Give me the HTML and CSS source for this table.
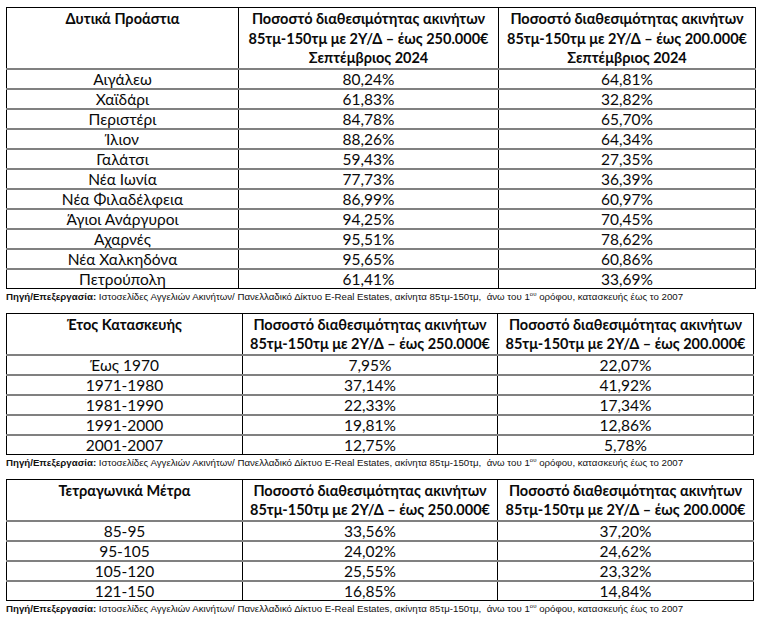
FILE: index.html
```html
<!DOCTYPE html>
<html lang="el">
<head>
<meta charset="utf-8">
<link rel="stylesheet" href="styles.css">
</head>
<body>
<div class="page">
  <table class="data t1">
    <colgroup><col class="c1"><col class="c2"><col class="c3"></colgroup>
    <thead>
      <tr>
        <th>Δυτικά Προάστια</th>
        <th>Ποσοστό διαθεσιμότητας ακινήτων<br>85τμ-150τμ με 2Υ/Δ – έως 250.000€<br>Σεπτέμβριος 2024</th>
        <th>Ποσοστό διαθεσιμότητας ακινήτων<br>85τμ-150τμ με 2Υ/Δ – έως 200.000€<br>Σεπτέμβριος 2024</th>
      </tr>
    </thead>
    <tbody>
      <tr><td>Αιγάλεω</td><td>80,24%</td><td>64,81%</td></tr>
      <tr><td>Χαϊδάρι</td><td>61,83%</td><td>32,82%</td></tr>
      <tr><td>Περιστέρι</td><td>84,78%</td><td>65,70%</td></tr>
      <tr><td>Ίλιον</td><td>88,26%</td><td>64,34%</td></tr>
      <tr><td>Γαλάτσι</td><td>59,43%</td><td>27,35%</td></tr>
      <tr><td>Νέα Ιωνία</td><td>77,73%</td><td>36,39%</td></tr>
      <tr><td>Νέα Φιλαδέλφεια</td><td>86,99%</td><td>60,97%</td></tr>
      <tr><td>Άγιοι Ανάργυροι</td><td>94,25%</td><td>70,45%</td></tr>
      <tr><td>Αχαρνές</td><td>95,51%</td><td>78,62%</td></tr>
      <tr><td>Νέα Χαλκηδόνα</td><td>95,65%</td><td>60,86%</td></tr>
      <tr><td>Πετρούπολη</td><td>61,41%</td><td>33,69%</td></tr>
    </tbody>
  </table>
  <p class="source"><b>Πηγή/Επεξεργασία:</b> Ιστοσελίδες Αγγελιών Ακινήτων/ Πανελλαδικό Δίκτυο E-Real Estates, ακίνητα 85τμ-150τμ,&nbsp; άνω του 1<sup>ου</sup> ορόφου, κατασκευής έως το 2007</p>

  <table class="data t2">
    <colgroup><col class="c1"><col class="c2"><col class="c3"></colgroup>
    <thead>
      <tr>
        <th>Έτος Κατασκευής</th>
        <th>Ποσοστό διαθεσιμότητας ακινήτων<br>85τμ-150τμ με 2Υ/Δ – έως 250.000€</th>
        <th>Ποσοστό διαθεσιμότητας ακινήτων<br>85τμ-150τμ με 2Υ/Δ – έως 200.000€</th>
      </tr>
    </thead>
    <tbody>
      <tr><td>Έως 1970</td><td>7,95%</td><td>22,07%</td></tr>
      <tr><td>1971-1980</td><td>37,14%</td><td>41,92%</td></tr>
      <tr><td>1981-1990</td><td>22,33%</td><td class="nudge">17,34%</td></tr>
      <tr><td>1991-2000</td><td>19,81%</td><td class="nudge">12,86%</td></tr>
      <tr><td>2001-2007</td><td>12,75%</td><td>5,78%</td></tr>
    </tbody>
  </table>
  <p class="source"><b>Πηγή/Επεξεργασία:</b> Ιστοσελίδες Αγγελιών Ακινήτων/ Πανελλαδικό Δίκτυο E-Real Estates, ακίνητα 85τμ-150τμ,&nbsp; άνω του 1<sup>ου</sup> ορόφου, κατασκευής έως το 2007</p>

  <table class="data t3">
    <colgroup><col class="c1"><col class="c2"><col class="c3"></colgroup>
    <thead>
      <tr>
        <th>Τετραγωνικά Μέτρα</th>
        <th>Ποσοστό διαθεσιμότητας ακινήτων<br>85τμ-150τμ με 2Υ/Δ – έως 250.000€</th>
        <th>Ποσοστό διαθεσιμότητας ακινήτων<br>85τμ-150τμ με 2Υ/Δ – έως 200.000€</th>
      </tr>
    </thead>
    <tbody>
      <tr><td>85-95</td><td>33,56%</td><td>37,20%</td></tr>
      <tr><td>95-105</td><td>24,02%</td><td>24,62%</td></tr>
      <tr><td>105-120</td><td>25,55%</td><td>23,32%</td></tr>
      <tr><td>121-150</td><td>16,85%</td><td>14,84%</td></tr>
    </tbody>
  </table>
  <p class="source"><b>Πηγή/Επεξεργασία:</b> Ιστοσελίδες Αγγελιών Ακινήτων/ Πανελλαδικό Δίκτυο E-Real Estates, ακίνητα 85τμ-150τμ,&nbsp; άνω του 1<sup>ου</sup> ορόφου, κατασκευής έως το 2007</p>
</div>
</body>
</html>
```

FILE: styles.css
```css
html, body {
  margin: 0;
  padding: 0;
  background: #fff;
}

.page {
  padding: 7px 0 0 6px;
  font-family: Lato, "Open Sans", "Liberation Sans", sans-serif;
  color: #0a0a0a;
}

.data {
  border-collapse: collapse;
  table-layout: fixed;
  width: 749px;
  border: 1px solid #000;
}

.data th,
.data td {
  padding: 0;
  text-align: center;
  border-left: 1px solid #000;
  border-right: 1px solid #000;
}

.data th {
  font-weight: 700;
  font-size: 14.5px;
  line-height: 19.5px;
  vertical-align: top;
  padding-top: 1px;
}

.data td {
  font-size: 15.5px;
  height: 18px;
  line-height: 18px;
  border-top: 2px solid #808080;
}

.data .c1 { width: 232px; }
.data .c2 { width: 260px; }
.data .c3 { width: 257px; }

.t1 th { height: 57px; }
.t2, .t3 { width: 747px; }
.t2 .c1, .t3 .c1 { width: 236px; }
.t2 .c2, .t3 .c2 { width: 255px; }
.t2 .c3, .t3 .c3 { width: 256px; }
.t2 th { height: 37px; }
.t3 th { height: 39px; }

.nudge { padding-left: 8px; }

.source {
  margin: 0;
  font-size: 9.7px;
  line-height: 14px;
  padding: 1px 0 9px 0;
  color: #111;
  font-family: "Liberation Sans", sans-serif;
}

.source sup {
  font-size: 6px;
  line-height: 0;
}
```
